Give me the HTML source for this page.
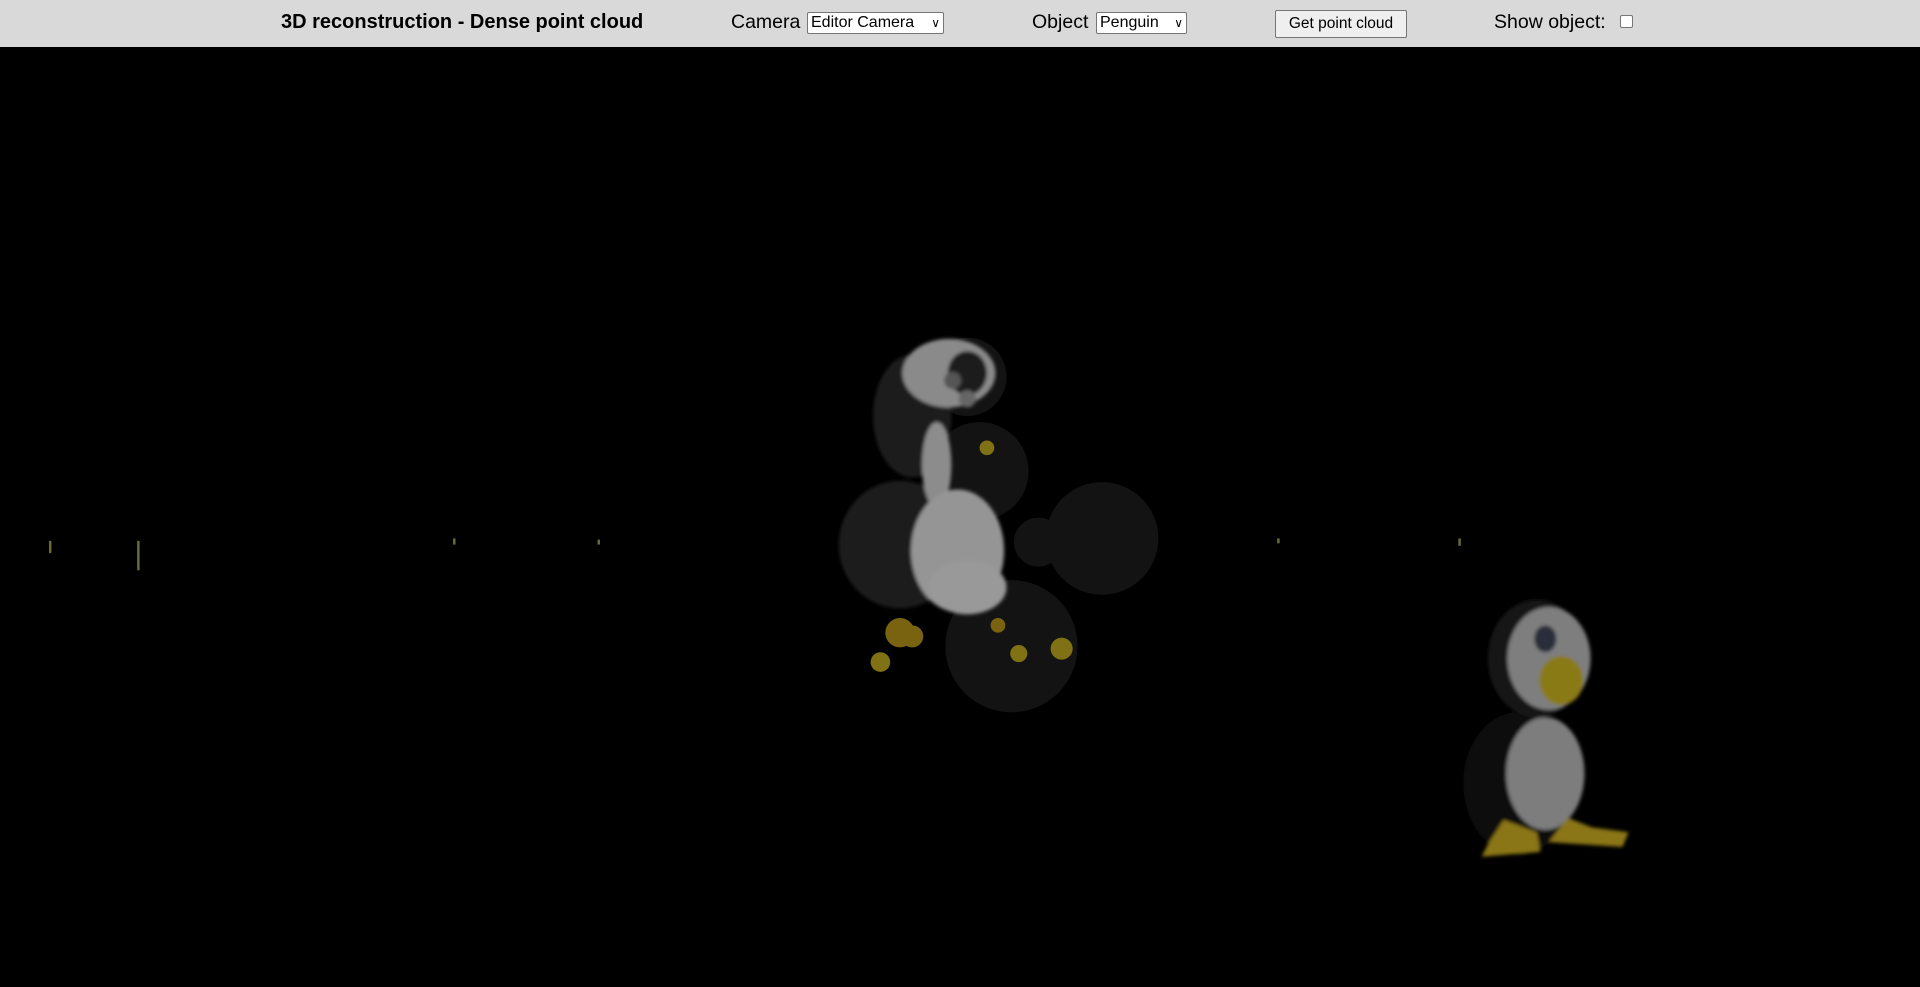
<!DOCTYPE html>
<html><head><meta charset="utf-8"><style>
html,body{margin:0;padding:0;width:1920px;height:987px;overflow:hidden;background:#000;font-family:"Liberation Sans",Arial,sans-serif}
#hdr{position:absolute;left:0;top:0;width:1920px;height:47px;background:#d9d9d9}
.t{position:absolute;top:11px;font-size:19.5px;color:#000;white-space:nowrap}
.sel{position:absolute;top:12px;height:22px;border:1px solid #767676;border-radius:2px;background:#fff;font-size:16px;line-height:20px;padding-left:3px;box-sizing:border-box;white-space:nowrap}
.sel span.ar{position:absolute;right:3px;top:0;font-size:12px}
#btn{position:absolute;left:1275px;top:10px;width:132px;height:28px;border:1px solid #767676;border-radius:2px;background:#efefef;font-size:15.5px;text-align:center;line-height:26px;box-sizing:border-box}
#cb{position:absolute;left:1620px;top:15px;width:13px;height:13px;border:1px solid #767676;border-radius:2px;background:#fff;box-sizing:border-box}
svg{position:absolute;left:0;top:47px}
</style></head><body>
<div id="hdr">
<div class="t" style="left:281px;font-weight:bold;font-size:20px">3D reconstruction - Dense point cloud</div>
<div class="t" style="left:731px">Camera</div>
<div class="sel" style="left:807px;width:137px">Editor Camera<span class="ar">&#8744;</span></div>
<div class="t" style="left:1032px">Object</div>
<div class="sel" style="left:1096px;width:91px">Penguin<span class="ar">&#8744;</span></div>
<div id="btn">Get point cloud</div>
<div class="t" style="left:1494px">Show object:</div>
<div id="cb"></div>
</div>
<svg width="1920" height="940" viewBox="0 39 1568 767">
<defs><filter id="b"><feGaussianBlur stdDeviation="1.5"/></filter></defs>
<g fill="#131313">
<circle cx="900" cy="440" r="46"/><circle cx="826" cy="528" r="54"/>
<circle cx="800" cy="385" r="40"/><circle cx="790" cy="308" r="32"/><circle cx="848" cy="443" r="20"/>
</g>
<g filter="url(#b)">
<ellipse cx="735" cy="445" rx="50" ry="52" fill="#1f1f1f"/>
<ellipse cx="745" cy="340" rx="32" ry="50" fill="#1c1c1c"/>
<ellipse cx="775" cy="305" rx="38" ry="28" fill="#8a8a8a"/>
<ellipse cx="790" cy="305" rx="16" ry="18" fill="#1a1a1a"/>
<circle cx="778" cy="311" r="7" fill="#555"/><circle cx="790" cy="326" r="7" fill="#666"/>
<ellipse cx="765" cy="380" rx="12" ry="35" fill="#8c8c8c"/>
<ellipse cx="782" cy="450" rx="38" ry="50" fill="#959595"/>
<ellipse cx="790" cy="480" rx="32" ry="22" fill="#999"/>
</g>
<g fill="#7a6310"><circle cx="735" cy="517" r="12"/><circle cx="745" cy="520" r="9"/><circle cx="815" cy="511" r="6"/></g>
<g fill="#807114"><circle cx="719" cy="541" r="8"/><circle cx="832" cy="534" r="7"/><circle cx="867" cy="530" r="9"/><circle cx="806" cy="366" r="6"/></g>
<g fill="#6b6b3a"><rect x="40" y="442" width="2" height="10"/><rect x="112" y="442" width="2" height="24"/><rect x="370" y="440" width="2" height="5"/><rect x="488" y="441" width="2" height="4"/><rect x="1043" y="440" width="2" height="4"/><rect x="1191" y="440" width="2" height="6"/></g>
<g filter="url(#b)">
<ellipse cx="1240" cy="640" rx="45" ry="58" fill="#111"/>
<ellipse cx="1255" cy="538" rx="40" ry="48" fill="#161616"/>
<ellipse cx="1265" cy="538" rx="34" ry="42" fill="#7e7e7e"/>
<ellipse cx="1262" cy="632" rx="32" ry="46" fill="#7d7d7d"/>
<ellipse cx="1262" cy="522" rx="9" ry="11" fill="#2a2d3a"/>
<ellipse cx="1275" cy="556" rx="18" ry="20" fill="#8a7a14"/>
<polygon points="1215,690 1228,670 1255,680 1258,696 1210,700" fill="#8a7612"/>
<polygon points="1265,688 1280,668 1300,676 1330,680 1325,692" fill="#8a7612"/>
</g>
</svg>
</body></html>
